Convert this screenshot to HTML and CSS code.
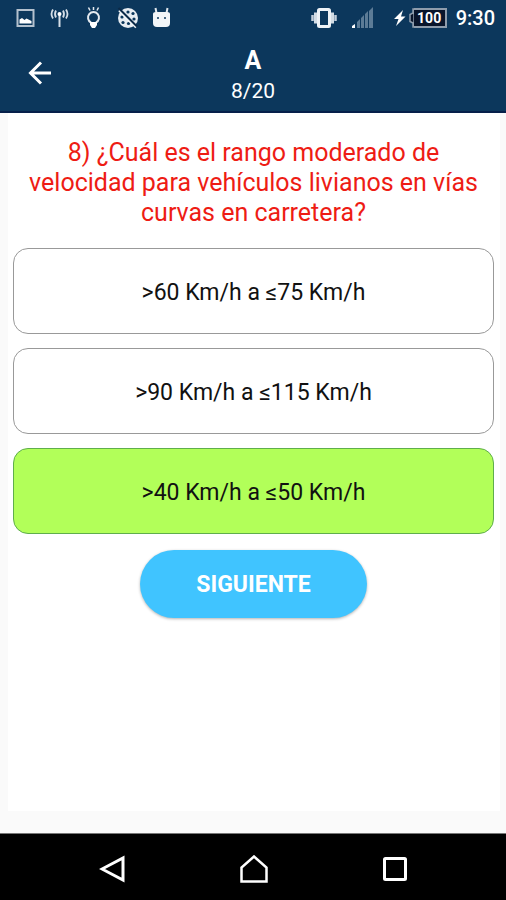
FILE: index.html
```html
<!DOCTYPE html>
<html lang="es">
<head>
  <meta charset="UTF-8">
  <title>Examen A - Pregunta 8</title>
  <meta name="viewport" content="width=device-width, initial-scale=1.0">
  <link rel="stylesheet" href="styles.css">
</head>

<body>
  <header class="header">
    <div class="status-bar">
      <div class="status-left">
        <svg width="24" height="24" viewBox="0 0 24 24">
          <rect x="3.5" y="4" width="16" height="16" fill="none" stroke="#b4c1ce" stroke-width="2"/>
          <path d="M5.500 17.500v-4l2.500-1.500 2.500 2 2-1.500 5 2.500v2.500z" fill="#fff"/>
        </svg>
        <svg width="24" height="24" viewBox="0 0 24 24" fill="none" stroke="#d5dee7" stroke-width="2">
          <path d="M11.500 8v13"/>
          <path d="M8 4.500q-2 3.500 0 7M15 4.500q2 3.500 0 7M5 3.500q-3 4.500 0 9M18 3.500q3 4.500 0 9" stroke-width="1.800"/>
          <circle cx="11.500" cy="8" r="2" fill="#fff" stroke="none"/>
        </svg>
        <svg width="24" height="24" viewBox="0 0 24 24" fill="none" stroke="#e3e9ef" stroke-width="2">
          <path d="M9 16.500a5.500 5.500 0 1 1 5 0"/>
          <path d="M8 16h7v3l-2 3h-3l-2-3z" fill="#fff" stroke="none"/>
          <path d="M11.500 1v3M6.500 1.500l1.500 3M16.500 1.500l-1.500 3" stroke-width="1.500"/>
        </svg>
        <svg width="24" height="24" viewBox="0 0 24 24">
          <circle cx="12" cy="12" r="10" fill="#e8edf2"/>
          <g fill="#0c375c">
            <circle cx="12" cy="6" r="1.600"/>
            <circle cx="17" cy="7.500" r="1.600"/>
            <circle cx="6" cy="11" r="1.600"/>
            <circle cx="7" cy="16.500" r="1.600"/>
            <circle cx="12.500" cy="17.500" r="1.600"/>
            <circle cx="18" cy="13" r="1.600"/>
          </g>
          <path d="M3 4.500l17 17" stroke="#f5f8fa" stroke-width="2"/>
          <path d="M2.500 2l18.500 18.500" stroke="#0c2a48" stroke-width="2"/>
        </svg>
        <svg width="24" height="24" viewBox="0 0 24 24">
          <path d="M5.500 2l1 5M17.500 2l-1 5" stroke="#e3e9ef" stroke-width="2"/>
          <path d="M3 8q0-2 3-2h11q3 0 3 2v9q0 4-4 4H7q-4 0-4-4z" fill="#f2f5f8"/>
          <circle cx="8" cy="12" r="1" fill="#0c375c"/>
          <circle cx="15" cy="12" r="1" fill="#0c375c"/>
        </svg>
      </div>
      <div class="status-right">
        <svg class="vibrate" width="28" height="22" viewBox="0 0 28 22">
          <rect x="8.500" y="2.500" width="11" height="17" rx="1" fill="none" stroke="#eef2f6" stroke-width="3"/>
          <path d="M5.500 5.500v11M22.500 5.500v11" stroke="#d3dce5" stroke-width="3"/>
          <path d="M2.500 8v6M25.500 8v6" stroke="#c3ceda" stroke-width="2.500"/>
        </svg>
        <svg class="signal" width="22" height="22" viewBox="0 0 22 22">
          <path d="M0 21v-2l3-2v4z" fill="#fff"/>
          <path d="M5 21v-6l3-3v9zM9 21v-10l3-3v13zM13 21V7l3-3v17zM17 21V4l4-4v21z" fill="#5c7b96"/>
        </svg>
        <svg class="bolt" width="12" height="18" viewBox="0 0 12 18">
          <path d="M9 1L0 10h4.500L2 17l9.500-9.500H7z" fill="#fff"/>
        </svg>
        <div class="battery">
          <svg class="battery-tip" width="5" height="20" viewBox="0 0 5 20">
            <path d="M5 1H4v4L1 6.500v7L4 15v4h1z" fill="#09152b" stroke="#8e9cac" stroke-width="1.500"/>
          </svg>
          <span class="battery-level">100</span>
        </div>
        <span class="clock">9:30</span>
      </div>
    </div>
    <div class="app-bar">
      <button class="back" type="button" aria-label="Volver">
        <svg width="24" height="24" viewBox="0 0 24 24" fill="none" stroke="#fff" stroke-width="3">
          <path d="M23 12H3M13 1.500L2.500 12 13 22.500"/>
        </svg>
      </button>
      <div class="titles">
        <h1>A</h1>
        <p>8/20</p>
      </div>
    </div>
  </header>

  <main class="content">
    <h2 class="question">8) ¿Cuál es el rango moderado de velocidad para vehículos livianos en vías curvas en carretera?</h2>
    <div class="options">
      <button class="option" type="button">&gt;60 Km/h a ≤75 Km/h</button>
      <button class="option" type="button">&gt;90 Km/h a ≤115 Km/h</button>
      <button class="option correct" type="button">&gt;40 Km/h a ≤50 Km/h</button>
    </div>
    <button class="next" type="button">SIGUIENTE</button>
  </main>

  <nav class="nav-bar">
    <button type="button" aria-label="Atrás">
      <svg width="28" height="28" viewBox="0 0 28 28" fill="none" stroke="#fff" stroke-width="3">
        <path d="M24 3v22L3 14z"/>
      </svg>
    </button>
    <button type="button" aria-label="Inicio">
      <svg width="28" height="28" viewBox="0 0 28 28" fill="none" stroke="#fff" stroke-width="2.500">
        <path d="M1.500 26.500V12.500L14 1.500l12.500 11v14z"/>
      </svg>
    </button>
    <button type="button" aria-label="Recientes">
      <svg width="28" height="28" viewBox="0 0 28 28" fill="none" stroke="#fff" stroke-width="3">
        <rect x="3.500" y="3.500" width="21" height="21" rx="1"/>
      </svg>
    </button>
  </nav>
</body>
</html>
```
FILE: styles.css
```css
* {
  box-sizing: border-box;
}

body {
  margin: 0;
  min-height: 100vh;
  display: flex;
  flex-direction: column;
  font-family: Roboto, "Liberation Sans", sans-serif;
  background-color: #fafafa;
}

button {
  font-family: inherit;
  padding: 0;
  border: none;
  background: none;
  cursor: pointer;
}

svg {
  display: block;
}

.header {
  background-color: #0c375c;
  color: #fff;
  border-bottom: 2px solid #06204a;
}

.status-bar {
  display: flex;
  align-items: center;
  justify-content: space-between;
  height: 35px;
  padding: 0 11px 0 14px;
}

.status-left {
  display: flex;
  gap: 10px;
}

.status-right {
  display: flex;
  align-items: center;
}

.signal {
  margin-left: 14px;
}

.bolt {
  margin-left: 20px;
}

.battery {
  display: flex;
  align-items: center;
  margin-left: 3px;
}

.battery-level {
  width: 33px;
  border: 2px solid #8e9cac;
  border-left: none;
  background-color: #09152b;
  font-size: 14px;
  font-weight: bold;
  line-height: 16px;
  text-align: center;
}

.clock {
  margin-left: 9px;
  font-size: 20px;
  font-weight: 500;
}

.app-bar {
  display: grid;
  grid-template-columns: 80px 1fr 80px;
  align-items: center;
  height: 76px;
}

.back {
  display: flex;
  justify-content: center;
  padding: 12px 0;
}

.titles {
  padding-top: 6px;
  text-align: center;
}

.titles h1 {
  margin: 0;
  font-size: 25px;
  font-weight: bold;
  line-height: 30px;
}

.titles p {
  margin: 0;
  font-size: 21px;
  line-height: 30px;
}

.content {
  flex: 1;
  display: flex;
  flex-direction: column;
  align-items: center;
  margin: 0 6px 22px 8px;
  padding: 25px 6px 0 5px;
  background-color: #fff;
}

.question {
  margin: 0;
  padding: 0 10px;
  color: #ee1c14;
  font-size: 25px;
  font-weight: normal;
  line-height: 30px;
  text-align: center;
}

.options {
  display: flex;
  flex-direction: column;
  gap: 14px;
  width: 100%;
  margin-top: 20px;
}

.option {
  padding: 29px 16px 25px;
  border: 1px solid #999;
  border-radius: 15px;
  background-color: #fff;
  color: #111;
  font-size: 23px;
  line-height: 30px;
}

.option.correct {
  border-color: #5fae4c;
  background-color: #b2ff59;
}

.next {
  margin-top: 16px;
  padding: 20px 56px 18px;
  border-radius: 34px;
  background-color: #40c4ff;
  box-shadow: 0 1px 3px rgba(0, 0, 0, 0.3);
  color: #fff;
  font-size: 23px;
  font-weight: bold;
  line-height: 30px;
}

.nav-bar {
  display: flex;
  justify-content: center;
  gap: 93px;
  padding: 13px 0 9px 2px;
  border-top: 1px solid #777;
  background-color: #000;
}

.nav-bar button {
  display: flex;
  align-items: center;
  justify-content: center;
  width: 48px;
  height: 44px;
}
```
